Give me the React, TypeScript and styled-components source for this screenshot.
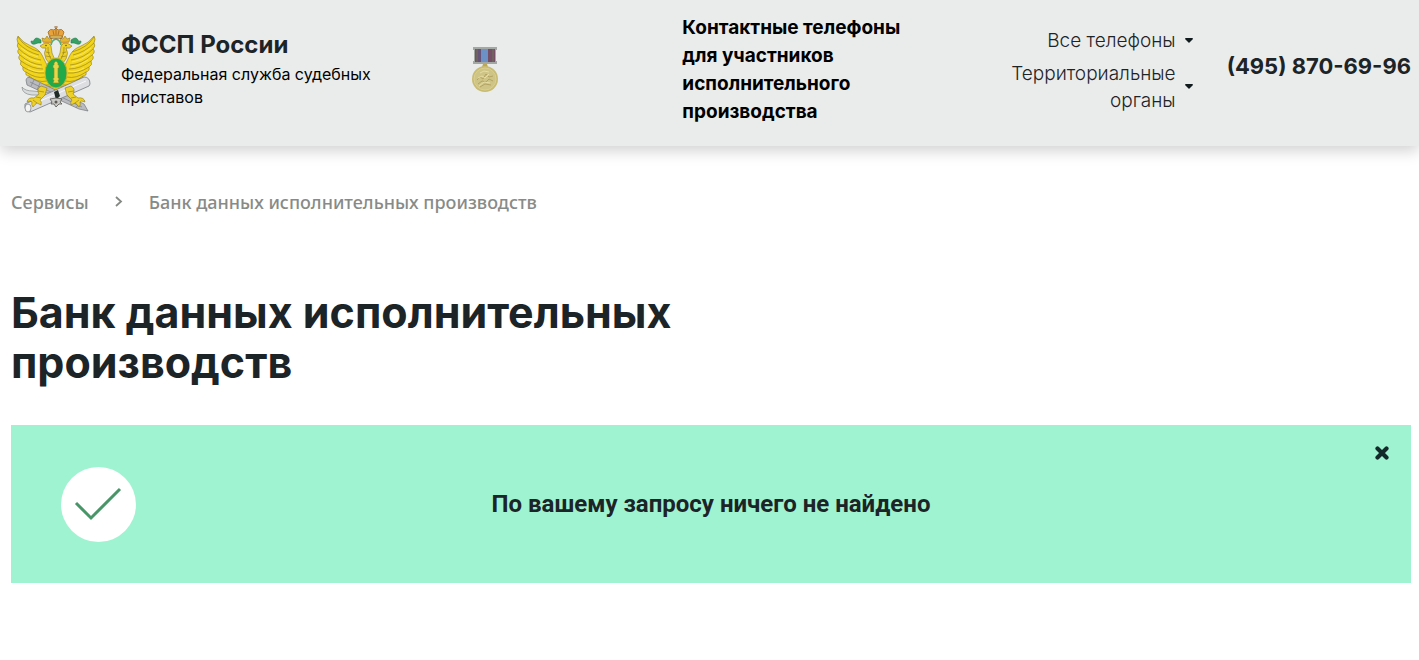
import React, { useState } from "react";
import styled, { createGlobalStyle } from "styled-components";

const GlobalStyle = createGlobalStyle`
  * { box-sizing: border-box; }
  body {
    margin: 0;
    background: #fff;
    color: #1d2427;
    font-family: Inter, "Liberation Sans", sans-serif;
  }
  h1, p { margin: 0; }
  button { border: 0; padding: 0; background: none; color: inherit; font: inherit; cursor: pointer; }
  a { color: inherit; text-decoration: none; }
`;

const Header = styled.header`
  display: grid;
  grid-template-columns: 460fr 211fr 250fr 261fr auto;
  align-items: center;
  padding: 14px 8px 20px 11px;
  background: #eaeceb;
  box-shadow: 0 5px 14px rgba(0, 0, 0, 0.18);
`;

const Brand = styled.a`
  display: flex;
  align-items: center;
  gap: 20px;
`;

const BrandText = styled.span`
  display: flex;
  flex-direction: column;
  width: 270px;
  padding-bottom: 4px;
`;

const BrandName = styled.strong`
  font-size: 24px;
  font-weight: 700;
  line-height: 36px;
`;

const BrandCaption = styled.span`
  color: #000;
  font-size: 16px;
  line-height: 23px;
`;

const ContactTitle = styled.p`
  max-width: 240px;
  color: #000;
  font-size: 19px;
  font-weight: 700;
  line-height: 28px;
`;

const PhoneMenus = styled.nav`
  display: flex;
  flex-direction: column;
  align-items: flex-end;
  gap: 6px;
`;

const MenuButton = styled.button`
  display: flex;
  align-items: center;
  gap: 8px;
  max-width: 200px;
  font-size: 19px;
  font-weight: 300;
  line-height: 27px;
  text-align: right;
`;

const CaretIcon = styled.svg`
  flex: none;
`;

const Phone = styled.a`
  padding: 0 0 8px 33px;
  font-size: 22px;
  font-weight: 700;
  line-height: 28px;
  white-space: nowrap;
`;

const Main = styled.main`
  padding: 42px 8px 40px 11px;
`;

const Breadcrumbs = styled.nav`
  display: flex;
  align-items: center;
  gap: 26px;
  color: #878b87;
  font-family: "Noto Sans", "Open Sans", sans-serif;
  font-size: 18px;
  font-weight: 500;
  line-height: 28px;
`;

const Title = styled.h1`
  max-width: 50%;
  margin-top: 71px;
  font-size: 43px;
  font-weight: 700;
  line-height: 50px;
`;

const Alert = styled.section`
  display: grid;
  grid-template-columns: 105px 1fr 105px;
  align-items: center;
  margin-top: 38px;
  padding: 20px;
  min-height: 158px;
  background: #9ff3d1;
`;

const CheckBadge = styled.svg`
  justify-self: end;
`;

const AlertText = styled.p`
  font-family: Roboto, sans-serif;
  font-size: 24px;
  font-weight: 700;
  line-height: 32px;
  text-align: center;
`;

const CloseButton = styled.button`
  display: flex;
  align-self: start;
  justify-self: end;
  padding: 1px 2px;
`;

const Emblem = () => (
  <svg width="90" height="90" viewBox="0 0 90 90" role="img" aria-label="Эмблема ФССП">
    <defs>
      <g id="wing" stroke="#8c7820" strokeWidth=".6" strokeLinejoin="round">
        <path
          fill="#f2d51b"
          d="M7 11 Q12 18 20 21 Q28 24 31 30 L36 40 L40 61 Q32 64 26 59 Q22 58 22 54 Q18 55 18 51 Q14 51 15 47 Q11 46 12 42 Q8 40 10 36 Q6 33 9 30 Q5 27 8 24 Q5 21 7 18 Q5 14 7 11Z"
        />
        <path
          fill="none"
          d="M7 18 Q16 27 28 30 M8 24 Q17 33 30 35 M9 30 Q19 39 31 40 M10 36 Q21 44 32 44 M12 42 Q23 49 33 48 M15 47 Q25 54 34 52 M18 51 Q26 58 36 56 M22 54 Q29 61 38 60 M7 12 Q14 23 29 27"
        />
        <path
          fill="none"
          stroke="#fff17a"
          d="M10 23 Q18 30 27 32 M11 29 Q20 36 29 37 M13 35 Q22 41 30 42 M17 43 Q25 48 33 46"
        />
      </g>
      <g id="head" stroke="#8c7820" strokeWidth=".6">
        <path fill="#eed128" d="M44 35 Q40 28 40 21 Q38 17 34 18 L29 21 Q31 24 35 23 Q32 28 35 34 L38 38Z" />
        <path fill="none" d="M37 22 Q36 28 40 34 M35 27 L39 28 M35 31 L40 32" />
        <path fill="#e6b52b" d="M32 17 L31 13 L34 14 L36 11 L38 14 L41 13 L40 18Z" />
        <path fill="none" stroke="#e29a3c" strokeWidth="1.2" d="M32 17 H40" />
        <circle cx="35" cy="20.5" r=".8" fill="#5d5220" stroke="none" />
        <path fill="#35a165" stroke="#277b4a" d="M30 15 Q25 11 23 15 Q23 17 20 16 Q20 20 24 19 L27 18 L30 18Z" />
      </g>
      <g id="foot" fill="#eed128" stroke="#8c7820" strokeWidth=".6">
        <path d="M30 61 Q25 64 28 69 L23 73 Q17 72 16 77 Q20 75 21 77 Q20 80 22 82 Q24 79 26 78 L30 80 Q31 77 29 75 L34 70 L36 63Z" />
        <path fill="none" d="M27 66 L33 67 M25 72 L30 73 M22 75 L26 78" />
      </g>
    </defs>
    <use href="#wing" />
    <use href="#wing" transform="matrix(-1 0 0 1 90 0)" />
    <use href="#head" />
    <use href="#head" transform="matrix(-1 0 0 1 90 0)" />
    <path d="M40 20 Q41 15 45 14 Q49 15 50 20" fill="none" stroke="#58aa78" strokeWidth="1.6" />
    <path d="M39 61 L35 70 L39 74 H51 L55 70 L51 61Z" fill="#e7c927" stroke="#8c7820" strokeWidth=".6" />
    <path d="M15 55 Q16 51 20 53 L73 79 L77 86 L68 84 L16 60Z" fill="#b9bbc0" stroke="#74777d" strokeWidth=".7" />
    <path d="M19 57 L71 82 M23 55 L20 61 M29 58 L26 65 M63 75 L60 80 M68 78 L65 83" stroke="#83868d" strokeWidth=".8" fill="none" />
    <path d="M11 62 Q14 66 22 66 L39 68 L37 70 L21 70 Q11 69 11 62Z" fill="#d9dcdc" stroke="#898d8e" strokeWidth=".7" />
    <path d="M14 79 L73 52 Q79 52 79 59 L78 61 L19 87 Q13 86 14 79Z" fill="#dddee2" stroke="#777b80" strokeWidth=".8" />
    <ellipse cx="17" cy="83" rx="3" ry="4" fill="#f4f4f4" stroke="#777b80" strokeWidth=".7" />
    <path d="M20 80 L75 56" stroke="#f8f8f8" strokeWidth="1" />
    <use href="#foot" />
    <use href="#foot" transform="matrix(-1 0 0 1 90 0)" />
    <ellipse cx="45" cy="48" rx="11" ry="15" fill="#20aa4a" stroke="#c7b22d" strokeWidth="1" />
    <path d="M43 38 L45 36 L47 38 V40 H48 V43 H47 V53 H48 V55 H47 L48 58 H42 L43 55 H42 V53 H43 V43 H42 V40 H43Z" fill="#e5d64a" stroke="#8c8c1e" strokeWidth=".6" />
    <path d="M43 67 L47 65 L49 71 L45 75Z" fill="#202b26" />
    <path d="M45 73 L39 74 L41 77 L40 79 L43 79 L45 82 L48 79 L51 79 L49 77 L51 74Z" fill="#c9c9c5" stroke="#55534c" strokeWidth=".8" />
    <circle cx="45" cy="77" r="1.5" fill="#5f5b52" />
    <g stroke="#91601f" strokeWidth=".7">
      <path fill="#e8a33d" d="M39 13 L37 7 Q39 3 43 5 L45 3 L47 5 Q51 3 53 7 L51 13Z" />
      <path fill="#f5dc72" d="M39 11 H51 V13 H39Z" />
      <path fill="none" d="M45 1 V10 M43 2 H47 M42 6 L43 10 M48 6 L47 10" />
    </g>
  </svg>
);

const Medal = () => (
  <svg width="28" height="48" viewBox="0 0 28 48" role="img" aria-label="Медаль">
    <path d="M2 1 H26 V4 H25 V15 H26 V18 H2 V15 H3 V4 H2Z" fill="#a4a8a4" />
    <path d="M4 3 H10 V16 H4Z" fill="#655378" />
    <path d="M10 3 H17 V16 H10Z" fill="#6b91c6" />
    <path d="M17 3 H24 V16 H17Z" fill="#744f65" />
    <path d="M6 3 V16 M22 3 V16" stroke="#6f625f" strokeWidth="2" />
    <path d="M12 18 H16 L17 21 H11Z" fill="#bba955" />
    <circle cx="14" cy="33" r="13" fill="#c8bb72" />
    <circle cx="14" cy="33" r="11" fill="#cec486" stroke="#dbcf90" strokeWidth="1" />
    <path d="M6 34 L9 31 L12 33 L15 28 L18 31 L22 30 M7 38 L11 35 L15 36 L18 33 L22 35 M9 41 L14 38 L20 39" fill="none" stroke="#b3a362" strokeWidth="1" />
    <path d="M7 32 L11 30 L14 32 L18 28 M8 40 L13 36 L19 37 M9 27 L13 25 L18 26" fill="none" stroke="#e7dda5" strokeWidth="1" />
  </svg>
);

const Caret = () => (
  <CaretIcon width="10" height="7" viewBox="0 0 10 7" aria-hidden="true">
    <path d="M2 1 H8 Q9 1 9 2 L5.5 5.5 Q5 6 4.5 5.5 L1 2 Q1 1 2 1Z" fill="#111a1c" />
  </CaretIcon>
);

export default function App() {
  const [alertOpen, setAlertOpen] = useState(true);
  return (
    <>
      <GlobalStyle />
      <Header>
        <Brand href="#home">
          <Emblem />
          <BrandText>
            <BrandName>ФССП России</BrandName>
            <BrandCaption>Федеральная служба судебных приставов</BrandCaption>
          </BrandText>
        </Brand>
        <Medal />
        <ContactTitle>Контактные телефоны для участников исполнительного производства</ContactTitle>
        <PhoneMenus aria-label="Телефоны">
          <MenuButton type="button">Все телефоны<Caret /></MenuButton>
          <MenuButton type="button">Территориальные органы<Caret /></MenuButton>
        </PhoneMenus>
        <Phone href="tel:+74958706996">(495) 870-69-96</Phone>
      </Header>
      <Main>
        <Breadcrumbs aria-label="Навигация">
          <a href="#services">Сервисы</a>
          <svg width="8" height="12" viewBox="0 0 8 12" aria-hidden="true">
            <path d="M1 1 L6 5.5 L1 10" fill="none" stroke="#858985" strokeWidth="1.8" />
          </svg>
          <a href="#bank">Банк данных исполнительных производств</a>
        </Breadcrumbs>
        <Title>Банк данных исполнительных производств</Title>
        {alertOpen && (
          <Alert role="status">
            <CheckBadge width="75" height="75" viewBox="0 0 75 75" aria-hidden="true">
              <circle cx="37.5" cy="37.5" r="37.5" fill="#fff" />
              <path d="M15 36 L30 51 L59 22" fill="none" stroke="#489667" strokeWidth="3" />
            </CheckBadge>
            <AlertText>По вашему запросу ничего не найдено</AlertText>
            <CloseButton type="button" aria-label="Закрыть" onClick={() => setAlertOpen(false)}>
              <svg width="14" height="14" viewBox="0 0 14 14" aria-hidden="true">
                <path d="M2.5 2.5 L11.5 11.5 M11.5 2.5 L2.5 11.5" stroke="#14292a" strokeWidth="4.2" strokeLinecap="round" />
              </svg>
            </CloseButton>
          </Alert>
        )}
      </Main>
    </>
  );
}
